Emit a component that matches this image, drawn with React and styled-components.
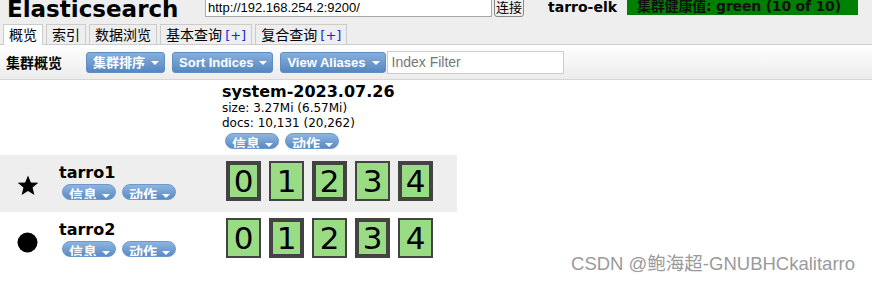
import React from 'react';
import styled, { createGlobalStyle } from 'styled-components';

const GlobalStyle = createGlobalStyle`
  html, body {
    margin: 0;
    padding: 0;
    background: #fff;
  }
  body {
    font-family: "DejaVu Sans", Verdana, "Noto Sans CJK SC", sans-serif;
    font-size: 12px;
    color: #000;
    overflow: hidden;
  }
`;

const Page = styled.div`
  position: relative;
  width: 872px;
  height: 285px;
  overflow: hidden;
`;

// Header
const Header = styled.div`
  background: #eee;
  margin-top: -3px;
`;

const TopBar = styled.div`
  display: flex;
  align-items: flex-start;
  height: 27px;
`;

const Logo = styled.h1`
  margin: 0 0 0 7px;
  width: 198px;
  font-size: 23px;
  line-height: 24px;
  font-weight: bold;
  white-space: nowrap;
`;

const UrlInput = styled.input`
  box-sizing: border-box;
  width: 287px;
  height: 20px;
  margin: 0;
  padding: 0 2px;
  border: 1px solid #a9a9a9;
  background: #fff;
  font-family: "Liberation Sans", Arial, sans-serif;
  font-size: 13px;
  color: #000;
`;

const ConnectButton = styled.button`
  box-sizing: border-box;
  height: 20px;
  margin-left: 2px;
  padding: 0 1px;
  border: 1px solid #888;
  border-radius: 3px;
  background: #f0f0f0;
  font-family: "Noto Sans CJK SC", sans-serif;
  font-size: 13px;
  line-height: 16px;
  color: #000;
`;

const ClusterName = styled.span`
  margin-left: 24px;
  font-size: 14px;
  font-weight: bold;
  line-height: 20px;
  width: 79px;
  white-space: nowrap;
`;

const Health = styled.span`
  box-sizing: border-box;
  width: 231px;
  height: 18px;
  padding-left: 10px;
  background: #008000;
  color: #111;
  font-size: 14px;
  font-weight: bold;
  line-height: 19px;
  letter-spacing: -0.2px;
  white-space: nowrap;
`;

const Tabs = styled.div`
  display: flex;
  gap: 3px;
  height: 20px;
  padding-left: 3px;
  border-bottom: 1px solid #ccc;
`;

const Tab = styled.div`
  box-sizing: border-box;
  height: ${p => (p.$active ? '21px' : '20px')};
  padding: 0 5px;
  border: 1px solid #ccc;
  border-bottom: none;
  background: ${p => (p.$active ? '#fff' : '#eee')};
  font-family: "Noto Sans CJK SC", sans-serif;
  font-size: 14px;
  line-height: 19px;
  white-space: nowrap;
`;

const Plus = styled.span`
  color: #2222dd;
  font-family: "DejaVu Sans", sans-serif;
  font-size: 13px;
`;

// Toolbar
const Toolbar = styled.div`
  display: flex;
  align-items: center;
  height: 34px;
  padding-left: 6px;
  background: linear-gradient(#fff, #ececec);
  border-bottom: 1px solid #d6d6d6;
`;

const ToolbarTitle = styled.span`
  font-family: "Noto Sans CJK SC", sans-serif;
  font-size: 14px;
  font-weight: bold;
  margin-right: 24px;
`;

const Caret = styled.span`
  display: inline-block;
  width: 0;
  height: 0;
  margin-left: ${p => p.$gap || 6}px;
  border-left: 4px solid transparent;
  border-right: 4px solid transparent;
  border-top: 4px solid #fff;
  vertical-align: middle;
`;

const MenuButton = styled.div`
  box-sizing: border-box;
  height: 21px;
  margin-right: 7px;
  padding: 0 5px 0 6px;
  border: 1px solid #5f8dc4;
  border-radius: 3px;
  background: linear-gradient(#86afdc, #5787c1);
  color: #fff;
  font-family: "Liberation Sans", "Noto Sans CJK SC", sans-serif;
  font-size: 13px;
  font-weight: bold;
  line-height: 19px;
  white-space: nowrap;
`;

const FilterInput = styled.input`
  box-sizing: border-box;
  width: 177px;
  height: 23px;
  margin: 0 0 0 -6px;
  padding: 0 4px;
  border: 1px solid #ccc;
  font-family: "Liberation Sans", Arial, sans-serif;
  font-size: 14px;
  &::placeholder {
    color: #777;
  }
`;

// Cluster overview
const Grid = styled.div`
  display: grid;
  grid-template-columns: 222px 235px;
  width: 457px;
`;

const Blank = styled.div``;

const IndexHead = styled.div`
  padding-top: 2px;
  height: 73px;
`;

const IndexName = styled.div`
  font-size: 16px;
  font-weight: bold;
  line-height: 19px;
`;

const Stat = styled.div`
  font-size: 12px;
  line-height: 15px;
`;

const Pills = styled.div`
  display: flex;
  gap: 6px;
  margin: 2px 0 0 3px;
`;

const Pill = styled.div`
  box-sizing: border-box;
  height: 16px;
  padding: 0 5px 0 6px;
  overflow: hidden;
  border: 1px solid #6d98ca;
  border-radius: 8px;
  background: linear-gradient(#8db5e0, #5b8bc4);
  color: #fff;
  font-family: "Noto Sans CJK SC", sans-serif;
  font-size: 14px;
  font-weight: bold;
  line-height: 18px;
  white-space: nowrap;
`;

const NodeCell = styled.div`
  display: flex;
  height: 57px;
  background: ${p => (p.$shaded ? '#eee' : '#fff')};
`;

const NodeIcon = styled.div`
  display: flex;
  align-items: center;
  justify-content: center;
  width: 55px;
  padding-top: 4px;
`;

const NodeInfo = styled.div`
  padding: 8px 0 0 4px;
`;

const NodeName = styled.div`
  font-size: 16px;
  font-weight: bold;
  line-height: 19px;
  margin-bottom: 2px;
`;

const ShardCell = styled.div`
  display: flex;
  gap: 8px;
  height: 57px;
  box-sizing: border-box;
  padding: 6px 0 0 4px;
  background: ${p => (p.$shaded ? '#eee' : '#fff')};
`;

const Shard = styled.div`
  box-sizing: border-box;
  width: 35px;
  height: 40px;
  border: ${p => (p.$primary ? '4px' : '2px')} solid #434343;
  background: #99dc84;
  display: flex;
  align-items: center;
  justify-content: center;
  font-size: 31px;
  line-height: 1;
`;

const Watermark = styled.div`
  position: absolute;
  right: 17px;
  bottom: 10px;
  color: #9a9a9a;
  font-family: "Liberation Sans", "Noto Sans CJK SC", sans-serif;
  font-size: 18.5px;
  text-shadow: 0 0 1px #fff;
  white-space: nowrap;
`;

const Star = () => (
  <svg width="22" height="21" viewBox="0 0 24 23">
    <path d="M12 0.5l3.1 7.6 8.2 0.5-6.3 5.2 2 8-7-4.4-7 4.4 2-8L0.7 8.6l8.2-0.5z" fill="#000" />
  </svg>
);

const Dot = () => (
  <svg width="21" height="21" viewBox="0 0 21 21">
    <circle cx="10.5" cy="10.5" r="10" fill="#000" />
  </svg>
);

const nodes = [
  { name: 'tarro1', master: true, primaries: [0, 2, 4] },
  { name: 'tarro2', master: false, primaries: [1, 3] },
];

const ActionPills = () => (
  <Pills>
    <Pill>信息<Caret $gap={5} /></Pill>
    <Pill>动作<Caret $gap={5} /></Pill>
  </Pills>
);

const App = () => (
  <Page>
    <GlobalStyle />
    <Header>
      <TopBar>
        <Logo>Elasticsearch</Logo>
        <UrlInput defaultValue="http://192.168.254.2:9200/" />
        <ConnectButton>连接</ConnectButton>
        <ClusterName>tarro-elk</ClusterName>
        <Health>集群健康值: green (10 of 10)</Health>
      </TopBar>
      <Tabs>
        <Tab $active>概览</Tab>
        <Tab>索引</Tab>
        <Tab>数据浏览</Tab>
        <Tab>基本查询 <Plus>[+]</Plus></Tab>
        <Tab>复合查询 <Plus>[+]</Plus></Tab>
      </Tabs>
    </Header>
    <Toolbar>
      <ToolbarTitle>集群概览</ToolbarTitle>
      <MenuButton>集群排序<Caret /></MenuButton>
      <MenuButton>Sort Indices<Caret /></MenuButton>
      <MenuButton>View Aliases<Caret /></MenuButton>
      <FilterInput placeholder="Index Filter" />
    </Toolbar>
    <Grid>
      <Blank />
      <IndexHead>
        <IndexName>system-2023.07.26</IndexName>
        <Stat>size: 3.27Mi (6.57Mi)</Stat>
        <Stat>docs: 10,131 (20,262)</Stat>
        <ActionPills />
      </IndexHead>
      {nodes.map((node, i) => (
        <React.Fragment key={node.name}>
          <NodeCell $shaded={i % 2 === 0}>
            <NodeIcon>{node.master ? <Star /> : <Dot />}</NodeIcon>
            <NodeInfo>
              <NodeName>{node.name}</NodeName>
              <ActionPills />
            </NodeInfo>
          </NodeCell>
          <ShardCell $shaded={i % 2 === 0}>
            {[0, 1, 2, 3, 4].map(n => (
              <Shard key={n} $primary={node.primaries.includes(n)}>{n}</Shard>
            ))}
          </ShardCell>
        </React.Fragment>
      ))}
    </Grid>
    <Watermark>CSDN @鲍海超-GNUBHCkalitarro</Watermark>
  </Page>
);

export default App;
